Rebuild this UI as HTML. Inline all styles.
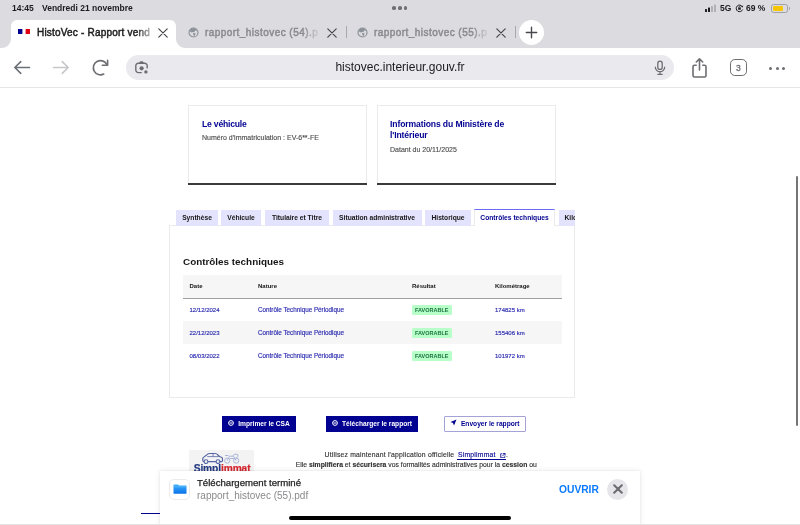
<!DOCTYPE html>
<html><head><meta charset="utf-8">
<style>
*{margin:0;padding:0;box-sizing:border-box}
body{will-change:transform}
html,body{width:800px;height:525px;overflow:hidden;background:#fff;font-family:"Liberation Sans",sans-serif}
.a{position:absolute}
#top{left:0;top:0;width:800px;height:48px;background:#dbdbe0}
.st{font-size:8.5px;color:#1c1c1e;font-weight:bold;top:3px;line-height:10px;letter-spacing:0}
.tabt{font-size:10px;letter-spacing:0.45px;line-height:12px;top:27px;white-space:nowrap;overflow:hidden;-webkit-text-stroke:0.45px currentColor;-webkit-mask-image:linear-gradient(to right,#000 86%,rgba(0,0,0,.15) 100%)}
#tb{left:0;top:48px;width:800px;height:40px;background:#fff;border-bottom:1px solid #e6e6e6}
#url{left:126px;top:55px;width:548px;height:25px;border-radius:12.5px;background:#e9e9ee}
.dsfr{color:#000091}
.card{background:#fff;border:1px solid #ebebeb;border-bottom:none}
.card .bl{position:absolute;left:-1px;right:-1px;bottom:0;height:2px;background:#3a3a3a}
.tab{top:210px;height:15.6px;background:#e3e3fd;font-size:6.7px;font-weight:bold;color:#161616;line-height:15.5px;text-align:center;white-space:nowrap}
.th{font-size:6px;font-weight:bold;color:#161616;line-height:8px}
.td{font-size:6px;color:#2a2ab0;line-height:8px;white-space:nowrap;-webkit-text-stroke:0.15px currentColor}
.badge{font-size:5.5px;font-weight:bold;color:#18753c;background:#b8fec9;width:40.5px;height:10px;line-height:10px;text-align:center;border-radius:1.5px}
.btn{top:415.5px;height:16.5px;background:#000091;color:#fff;font-size:6.65px;font-weight:bold;line-height:16.5px;text-align:center;white-space:nowrap}
.sm{font-size:6.8px;line-height:8px;color:#2e2e2e;-webkit-text-stroke:0.12px currentColor;white-space:nowrap}
</style></head><body>
<!-- status bar + tabs -->
<div class="a" id="top"></div>
<div class="a st" style="left:12px">14:45</div>
<div class="a st" style="left:42px">Vendredi 21 novembre</div>
<div class="a" style="left:392.4px;top:6.4px;width:3.7px;height:3.7px;border-radius:50%;background:#6e6e73"></div>
<div class="a" style="left:398.1px;top:6.4px;width:3.7px;height:3.7px;border-radius:50%;background:#6e6e73"></div>
<div class="a" style="left:403.8px;top:6.4px;width:3.7px;height:3.7px;border-radius:50%;background:#6e6e73"></div>
<!-- right status -->
<svg class="a" style="left:704px;top:4px" width="14" height="9" viewBox="0 0 14 9">
<rect x="1" y="5" width="2" height="3" rx=".5" fill="#1c1c1e"/><rect x="4" y="3.5" width="2" height="4.5" rx=".5" fill="#1c1c1e"/><rect x="7" y="2" width="2" height="6" rx=".5" fill="#b0b0b5"/><rect x="10" y="0.5" width="2" height="7.5" rx=".5" fill="#b0b0b5"/></svg>
<div class="a st" style="left:720px">5G</div>
<svg class="a" style="left:734.5px;top:4.3px" width="9" height="9" viewBox="0 0 9 9"><path d="M7.6 5.6A3.3 3.3 0 1 1 7.3 2.6" fill="none" stroke="#1c1c1e" stroke-width="1"/><path d="M8.3 1.4L7.6 3.4L5.8 2.6Z" fill="#1c1c1e"/><rect x="3.2" y="3.6" width="2.6" height="2.2" rx=".4" fill="#1c1c1e"/><path d="M3.7 3.8V3.2A.8.8 0 0 1 5.3 3.2V3.8" fill="none" stroke="#1c1c1e" stroke-width=".6"/></svg>
<div class="a st" style="left:746px">69 %</div>
<div class="a" style="left:771px;top:4px;width:17px;height:8.5px;border:1px solid #a0a0a5;border-radius:2.5px"></div>
<div class="a" style="left:772.5px;top:5.5px;width:10px;height:5.5px;background:#f7c600;border-radius:1.2px"></div>
<div class="a" style="left:788.5px;top:6.5px;width:1.3px;height:3.5px;background:#a0a0a5;border-radius:0 1px 1px 0"></div>

<!-- active tab -->
<div class="a" style="left:11px;top:20px;width:165px;height:28px;background:#fff;border-radius:6px 6px 0 0"></div>
<svg class="a" style="left:2px;top:39px" width="9" height="9"><path d="M9 0 V9 H0 A9 9 0 0 0 9 0Z" fill="#fff"/></svg>
<svg class="a" style="left:176px;top:39px" width="9" height="9"><path d="M0 0 V9 H9 A9 9 0 0 1 0 0Z" fill="#fff"/></svg>
<svg class="a" style="left:18px;top:29.4px" width="12" height="5" viewBox="0 0 12 5"><rect x="0" y="0" width="4.4" height="5" fill="#000091"/><rect x="7.6" y="0" width="4.4" height="5" fill="#e1000f"/></svg>
<div class="a tabt" style="left:37px;width:113px;color:#1c1c1e;letter-spacing:0.2px;-webkit-mask-image:linear-gradient(to right,#000 88%,rgba(0,0,0,.35) 100%)">HistoVec - Rapport vend</div>
<svg class="a" style="left:158px;top:28px" width="10" height="10" viewBox="0 0 10 10"><path d="M0.8 0.8L9.2 9.2M9.2 0.8L0.8 9.2" stroke="#444449" stroke-width="1.15" stroke-linecap="round"/></svg>
<!-- tab2 -->
<svg class="a" style="left:187.5px;top:26.5px" width="11" height="11" viewBox="0 0 11 11"><circle cx="5.5" cy="5.5" r="4.5" fill="none" stroke="#8d9299" stroke-width="1.2"/><path d="M1.6 4.2Q2.8 1.2 5.5 1.1Q8.2 1.2 9.3 3.4Q8.3 3.9 7.6 3.3Q6.6 4.2 6.2 5.3Q4.6 4.6 3.6 5.6Q2.6 4.6 1.6 4.2Z" fill="#8d9299"/><path d="M5 6.1Q6.6 5.5 7.6 6.5Q7.3 8.4 5.9 9.4Q5.4 7.6 5 6.1Z" fill="#8d9299"/></svg>
<div class="a tabt" style="left:205px;width:114px;color:#8a8a8e;">rapport_histovec (54).p</div>
<svg class="a" style="left:327px;top:28px" width="10" height="10" viewBox="0 0 10 10"><path d="M0.8 0.8L9.2 9.2M9.2 0.8L0.8 9.2" stroke="#444449" stroke-width="1.15" stroke-linecap="round"/></svg>
<div class="a" style="left:346px;top:26px;width:1px;height:12px;background:#a8a8ad"></div>
<!-- tab3 -->
<svg class="a" style="left:356.5px;top:26.5px" width="11" height="11" viewBox="0 0 11 11"><circle cx="5.5" cy="5.5" r="4.5" fill="none" stroke="#8d9299" stroke-width="1.2"/><path d="M1.6 4.2Q2.8 1.2 5.5 1.1Q8.2 1.2 9.3 3.4Q8.3 3.9 7.6 3.3Q6.6 4.2 6.2 5.3Q4.6 4.6 3.6 5.6Q2.6 4.6 1.6 4.2Z" fill="#8d9299"/><path d="M5 6.1Q6.6 5.5 7.6 6.5Q7.3 8.4 5.9 9.4Q5.4 7.6 5 6.1Z" fill="#8d9299"/></svg>
<div class="a tabt" style="left:374px;width:114px;color:#8a8a8e;">rapport_histovec (55).p</div>
<svg class="a" style="left:496px;top:28px" width="10" height="10" viewBox="0 0 10 10"><path d="M0.8 0.8L9.2 9.2M9.2 0.8L0.8 9.2" stroke="#444449" stroke-width="1.15" stroke-linecap="round"/></svg>
<div class="a" style="left:515px;top:26px;width:1px;height:12px;background:#a8a8ad"></div>
<div class="a" style="left:519px;top:20px;width:25px;height:25px;border-radius:50%;background:#fff"></div>
<svg class="a" style="left:525px;top:26px" width="13" height="13" viewBox="0 0 13 13"><path d="M6.5 1.3V11.7M1.3 6.5H11.7" stroke="#48484e" stroke-width="1.4" stroke-linecap="round"/></svg>

<!-- toolbar -->
<div class="a" id="tb"></div>
<div class="a" id="url"></div>
<div class="a" style="left:0;top:55px;width:800px;text-align:center;font-size:12px;line-height:25px;color:#1c1c1e">histovec.interieur.gouv.fr</div>


<!-- toolbar icons -->
<svg class="a" style="left:13px;top:60px" width="18" height="15" viewBox="0 0 18 15"><path d="M1.8 7.5H16.5M7.8 1.7L1.8 7.5L7.8 13.3" fill="none" stroke="#6b6f76" stroke-width="1.6" stroke-linecap="round" stroke-linejoin="round"/></svg>
<svg class="a" style="left:52px;top:60px" width="18" height="15" viewBox="0 0 18 15"><path d="M1.5 7.5H16.2M10.2 1.7L16.2 7.5L10.2 13.3" fill="none" stroke="#c6c7ca" stroke-width="1.6" stroke-linecap="round" stroke-linejoin="round"/></svg>
<svg class="a" style="left:91px;top:59px" width="19" height="19" viewBox="0 0 19 19"><path d="M12.75 15A7.1 7.1 0 1 1 15.6 5.2" fill="none" stroke="#6d6d72" stroke-width="1.6" stroke-linecap="round"/><path d="M11.3 6.3H16.6V1.3" fill="none" stroke="#6d6d72" stroke-width="1.6" stroke-linecap="round" stroke-linejoin="round"/></svg>
<svg class="a" style="left:134px;top:60px" width="16" height="16" viewBox="0 0 16 16"><path d="M7.3 12.6H4.3A2.5 2.5 0 0 1 1.8 10.1V5.7A2.5 2.5 0 0 1 4.3 3.2H10.7A2.5 2.5 0 0 1 13.2 5.7V7.9" fill="none" stroke="#6d6d72" stroke-width="1.4" stroke-linecap="round"/><path d="M5 3.6L5.8 1.8Q6 1.2 6.6 1.2H8.4Q9 1.2 9.2 1.8L10 3.6Z" fill="#6d6d72"/><circle cx="7.6" cy="8.3" r="2.1" fill="#6d6d72"/><circle cx="11.9" cy="11.9" r="1.7" fill="#6d6d72"/></svg>
<svg class="a" style="left:653px;top:60px" width="14" height="16" viewBox="0 0 14 16"><rect x="4.8" y="1.2" width="4.4" height="8.2" rx="2.2" fill="none" stroke="#6d6d72" stroke-width="1.3"/><path d="M2.3 7A4.7 4.7 0 0 0 11.7 7M7 11.8V14.2M4.8 14.3H9.2" fill="none" stroke="#6d6d72" stroke-width="1.2" stroke-linecap="round"/></svg>
<svg class="a" style="left:690px;top:57px" width="19" height="21" viewBox="0 0 19 21"><path d="M6.2 8.2H4.5A1.5 1.5 0 0 0 3 9.7V18.5A1.5 1.5 0 0 0 4.5 20H14.5A1.5 1.5 0 0 0 16 18.5V9.7A1.5 1.5 0 0 0 14.5 8.2H12.8M9.5 13V1.8M6.3 5L9.5 1.8L12.7 5" fill="none" stroke="#6d6d72" stroke-width="1.6" stroke-linecap="round" stroke-linejoin="round"/></svg>
<div class="a" style="left:730px;top:59px;width:16.8px;height:16.8px;border:1.6px solid #6d6d72;border-radius:4.8px;font-size:8.6px;line-height:17.6px;text-align:center;color:#6d6d72;-webkit-text-stroke:0.3px #6d6d72">3</div>
<div class="a" style="left:769px;top:66.5px;width:3.2px;height:3.2px;border-radius:50%;background:#6d6d72"></div>
<div class="a" style="left:775.5px;top:66.5px;width:3.2px;height:3.2px;border-radius:50%;background:#6d6d72"></div>
<div class="a" style="left:782px;top:66.5px;width:3.2px;height:3.2px;border-radius:50%;background:#6d6d72"></div>

<!-- page -->
<div class="a card" style="left:188px;top:105px;width:179px;height:80px"><div class="bl"></div></div>
<div class="a dsfr" style="left:202px;top:118.5px;font-size:8.6px;letter-spacing:-0.2px;font-weight:bold;line-height:11.75px">Le véhicule</div>
<div class="a" style="left:202px;top:133.5px;font-size:7px;line-height:8px;color:#4a4a4a;-webkit-text-stroke:0.12px currentColor">Numéro d'immatriculation : EV-6**-FE</div>
<div class="a card" style="left:376.5px;top:105px;width:179px;height:80px"><div class="bl"></div></div>
<div class="a dsfr" style="left:390px;top:118.5px;font-size:8.6px;letter-spacing:-0.12px;font-weight:bold;line-height:11.75px;width:140px">Informations du Ministère de l'Intérieur</div>
<div class="a" style="left:390px;top:145.8px;font-size:7px;line-height:8px;color:#4a4a4a;-webkit-text-stroke:0.12px currentColor">Datant du 20/11/2025</div>

<!-- tabs panel -->
<div class="a" style="left:169px;top:225px;width:406px;height:173px;border:1px solid #ebebeb"></div>
<div class="a tab" style="left:176px;width:42px">Synthèse</div>
<div class="a tab" style="left:221px;width:40px">Véhicule</div>
<div class="a tab" style="left:265px;width:64px">Titulaire et Titre</div>
<div class="a tab" style="left:332.5px;width:89px">Situation administrative</div>
<div class="a tab" style="left:425px;width:46px">Historique</div>
<div class="a tab" style="left:474px;width:81px;top:209.3px;background:#fff;border-left:1px solid #ebebeb;border-right:1px solid #ebebeb;border-top:1.6px solid #6a6af4;color:#000091;line-height:15.2px;height:17px">Contrôles techniques</div>
<div class="a tab" style="left:558.5px;width:16px;overflow:hidden;text-align:left;padding-left:6px">Kilométrage</div>
<div class="a" style="left:575px;top:205px;width:225px;height:200px;background:#fff"></div>

<div class="a" style="left:183px;top:255.5px;font-size:9.9px;font-weight:bold;line-height:12px;color:#161616">Contrôles techniques</div>
<div class="a" style="left:182.5px;top:275px;width:379px;height:24px;background:#f6f6f6;border-bottom:1.2px solid #a0a0a0"></div>
<div class="a" style="left:182.5px;top:321px;width:379px;height:23px;background:#f6f6f6"></div>

<div class="a th" style="left:189.5px;top:282px">Date</div>
<div class="a th" style="left:258px;top:282px">Nature</div>
<div class="a th" style="left:412px;top:282px">Résultat</div>
<div class="a th" style="left:495px;top:282px">Kilométrage</div>
<div class="a td" style="left:189.5px;top:305.5px">12/12/2024</div>
<div class="a td" style="left:258px;top:305.5px;font-size:6.3px">Contrôle Technique Périodique</div>
<div class="a badge" style="left:411.5px;top:305.0px">FAVORABLE</div>
<div class="a td" style="left:495px;top:305.5px">174825 km</div>
<div class="a td" style="left:189.5px;top:328.5px">22/12/2023</div>
<div class="a td" style="left:258px;top:328.5px;font-size:6.3px">Contrôle Technique Périodique</div>
<div class="a badge" style="left:411.5px;top:328.0px">FAVORABLE</div>
<div class="a td" style="left:495px;top:328.5px">155406 km</div>
<div class="a td" style="left:189.5px;top:351.8px">08/03/2022</div>
<div class="a td" style="left:258px;top:351.8px;font-size:6.3px">Contrôle Technique Périodique</div>
<div class="a badge" style="left:411.5px;top:350.5px">FAVORABLE</div>
<div class="a td" style="left:495px;top:351.8px">101972 km</div>

<!-- buttons -->
<div class="a btn" style="left:222px;width:74px"><svg width="6" height="6" viewBox="0 0 6 6" style="margin-right:4px;vertical-align:-0.5px"><circle cx="3" cy="3" r="2.4" fill="none" stroke="#fff" stroke-width="1"/><path d="M1.5 3H4.5" stroke="#fff" stroke-width="1"/></svg>Imprimer le CSA</div>
<div class="a btn" style="left:326px;width:92px"><svg width="6" height="6" viewBox="0 0 6 6" style="margin-right:4px;vertical-align:-0.5px"><circle cx="3" cy="3" r="2.4" fill="none" stroke="#fff" stroke-width="1"/><path d="M1.5 3H4.5" stroke="#fff" stroke-width="1"/></svg>Télécharger le rapport</div>
<div class="a btn" style="left:444px;width:81.5px;background:#fff;color:#000091;border:1px solid #a3a3d8;border-radius:1px;line-height:14.5px"><svg width="7" height="7" viewBox="0 0 7 7" style="margin-right:4px;vertical-align:-0.5px"><path d="M6.5 0.5L0.5 3L3 4L4 6.5Z" fill="#000091"/></svg>Envoyer le rapport</div>

<!-- simplimmat -->
<div class="a" style="left:189px;top:450px;width:65px;height:25px;background:#f3f3f3"></div>
<svg class="a" style="left:201px;top:452px" width="40" height="12" viewBox="0 0 40 12"><path d="M3 9.6Q1.8 9.6 1.8 8.2V6.6Q1.8 5.2 3.4 4.7L6 2.6Q7.2 1.5 9 1.5H14Q15.6 1.5 17 3L18.6 4.6L20.4 5.2Q21.5 5.6 21.5 7V8.5Q21.5 9.6 20.4 9.6Z" fill="none" stroke="#5566a6" stroke-width="1.2"/><path d="M6.2 4.6H18M12 1.8V4.6" stroke="#5566a6" stroke-width=".8"/><circle cx="5" cy="9.6" r="1.9" fill="#f3f3f3" stroke="#5566a6" stroke-width="1.1"/><circle cx="17" cy="9.6" r="1.9" fill="#f3f3f3" stroke="#5566a6" stroke-width="1.1"/><g fill="none" stroke="#aab5da" stroke-width="1"><circle cx="26.2" cy="8.6" r="2.6"/><circle cx="35.2" cy="8.6" r="2.6"/><path d="M26.2 8.6L28.5 4.2H32.5L35.2 8.6M29 6.5H33M31.5 4Q34 0.8 36.8 2.6Q37.8 4.8 35 6.2M24 3.5H27.5"/></g></svg>
<div class="a" style="left:193.7px;top:463.3px;font-size:10.2px;font-weight:bold;line-height:12px;letter-spacing:-0.1px;-webkit-text-stroke:0.2px currentColor"><span style="color:#233a82">Simpl</span><span style="color:#d5242c">immat</span></div>
<div class="a sm" style="left:324.6px;top:451px;letter-spacing:0.2px">Utilisez maintenant l'application officielle</div>
<div class="a sm" style="left:458px;top:451px;letter-spacing:0.22px;color:#000091">Simplimmat</div>
<div class="a" style="left:457.4px;top:459px;width:48.5px;height:0.8px;background:#000091"></div>
<svg class="a" style="left:500.3px;top:452.5px" width="5.5" height="5.5" viewBox="0 0 6 6"><path d="M2.5 0.8H0.8V5.2H5.2V3.5M3.2 0.5H5.5V2.8M5.5 0.5L2.5 3.5" fill="none" stroke="#000091" stroke-width="0.9"/></svg>
<div class="a sm" style="left:506px;top:451px">.</div>
<div class="a sm" style="left:295.7px;top:461px">Elle <b>simplifiera</b> et <b>sécurisera</b> vos formalités administratives pour la <b>cession</b> ou</div>

<!-- scrollbar -->
<div class="a" style="left:795.9px;top:176.4px;width:2px;height:250px;background:#767676;border-radius:1px"></div>
<!-- blue line -->
<div class="a" style="left:141px;top:512.5px;width:20px;height:1.2px;background:#000091"></div>


<!-- notification -->
<div class="a" style="left:159.7px;top:471px;width:480.8px;height:60px;background:#fff;box-shadow:0 0 6px rgba(0,0,0,.09),0 0 1px rgba(0,0,0,.12)"></div>
<div class="a" style="left:168.8px;top:478.8px;width:21px;height:21px;border-radius:5px;background:#fff;border:1px solid #ececec"></div>
<svg class="a" style="left:172.5px;top:484px" width="14" height="10" viewBox="0 0 14 10"><defs><linearGradient id="fg" x1="0" y1="0" x2="0" y2="1"><stop offset="0" stop-color="#3ab0ff"/><stop offset="1" stop-color="#0a70e8"/></linearGradient></defs><path d="M0.5 1.2Q0.5 0.5 1.2 0.5H4.8L6 1.6H12.8Q13.5 1.6 13.5 2.3V9.3Q13.5 9.8 12.8 9.8H1.2Q0.5 9.8 0.5 9.3Z" fill="url(#fg)"/><path d="M0.5 2.8H13.5" stroke="#6fc0ff" stroke-width=".6"/></svg>
<div class="a" style="left:197px;top:476.8px;font-size:9.6px;line-height:12px;color:#1c1c1e;-webkit-text-stroke:0.25px #1c1c1e">Téléchargement terminé</div>
<div class="a" style="left:197px;top:490px;font-size:10px;line-height:12px;color:#8a8a8e">rapport_histovec (55).pdf</div>
<div class="a" style="left:559px;top:483.6px;font-size:10.25px;line-height:12px;color:#0a7aff;font-weight:bold">OUVRIR</div>
<div class="a" style="left:607.2px;top:478.8px;width:21px;height:21px;border-radius:50%;background:#e5e5ea"></div>
<svg class="a" style="left:612.7px;top:484.3px" width="10" height="10" viewBox="0 0 10 10"><path d="M1.2 1.2L8.8 8.8M8.8 1.2L1.2 8.8" stroke="#6c6c70" stroke-width="2" stroke-linecap="round"/></svg>
<div class="a" style="left:289px;top:516px;width:222px;height:4px;border-radius:2px;background:#000"></div>
<div class="a" style="left:0;top:523.5px;width:800px;height:1.5px;background:#e3e3e3"></div>
</body></html>
